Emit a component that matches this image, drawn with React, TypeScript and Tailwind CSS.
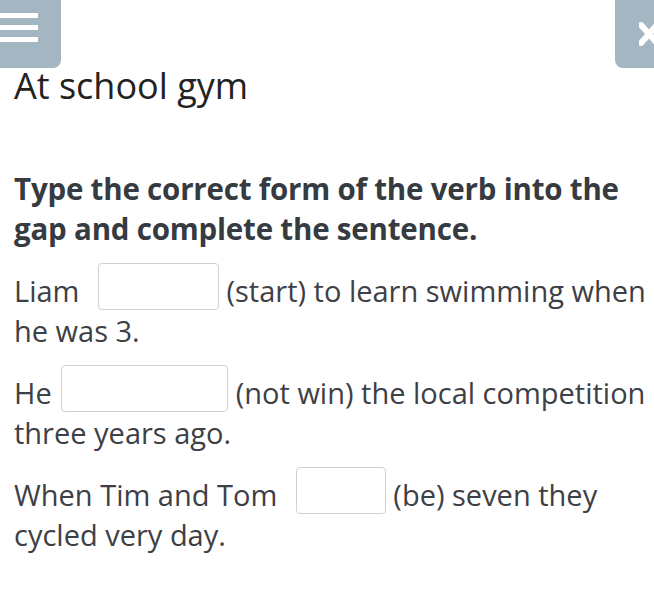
import React from 'react';

const Gap: React.FC<{ w: string; ml: string }> = ({ w, ml }) => (
    <input
        type="text"
        className={`relative -top-[8px] ${ml} mr-0 -my-[8px] inline-block h-[47px] ${w} rounded-[4px] border border-[#c9d3d6] bg-white align-middle outline-none`}
    />
);

export default function App() {
    return (
        <div className="relative h-[614px] w-[654px] overflow-hidden bg-white text-[#3d4045]" style={{ fontFamily: '"Open Sans", sans-serif' }}>
            <div className="flex items-start justify-between">
                <button className="flex h-[68px] w-[61px] items-start rounded-br-[8px] bg-[#a3b6c2] pt-[13px]">
                    <div className="flex flex-col gap-[7px]">
                        <span className="block h-[5px] w-[38px] bg-white" />
                        <span className="block h-[5px] w-[38px] bg-white" />
                        <span className="block h-[5px] w-[38px] bg-white" />
                    </div>
                </button>
                <button className="flex h-[68px] w-[39px] items-center rounded-bl-[8px] bg-[#a3b6c2] pl-[24px]">
                    <svg width="20" height="24" viewBox="0 0 20 24" className="shrink-0">
                        <path d="M2 3 L18 21 M18 3 L2 21" stroke="white" strokeWidth="6" strokeLinecap="round" />
                    </svg>
                </button>
            </div>
            <div className="pl-[14px]">
                <h1 className="-mt-[2px] text-[36px] leading-[40px] text-[#222]">At school gym</h1>
                <p className="mt-[63px] pr-[14px] text-[29.5px] font-bold leading-[40px] tracking-[-0.2px] text-[#363a41]">
                    Type the correct form of the verb into the gap and complete the sentence.
                </p>
                <div className="mt-[22px] space-y-[22px] text-[29px] leading-[40px]">
                    <p>
                        Liam <Gap w="w-[121px]" ml="ml-[11px]" /> (start) to learn swimming when he was 3.
                    </p>
                    <p>
                        He <Gap w="w-[167px]" ml="ml-[2px]" /> (not win) the local competition three years ago.
                    </p>
                    <p>
                        When Tim and Tom <Gap w="w-[90px]" ml="ml-[11px]" /> (be) seven they cycled very day.
                    </p>
                </div>
            </div>
        </div>
    );
}
